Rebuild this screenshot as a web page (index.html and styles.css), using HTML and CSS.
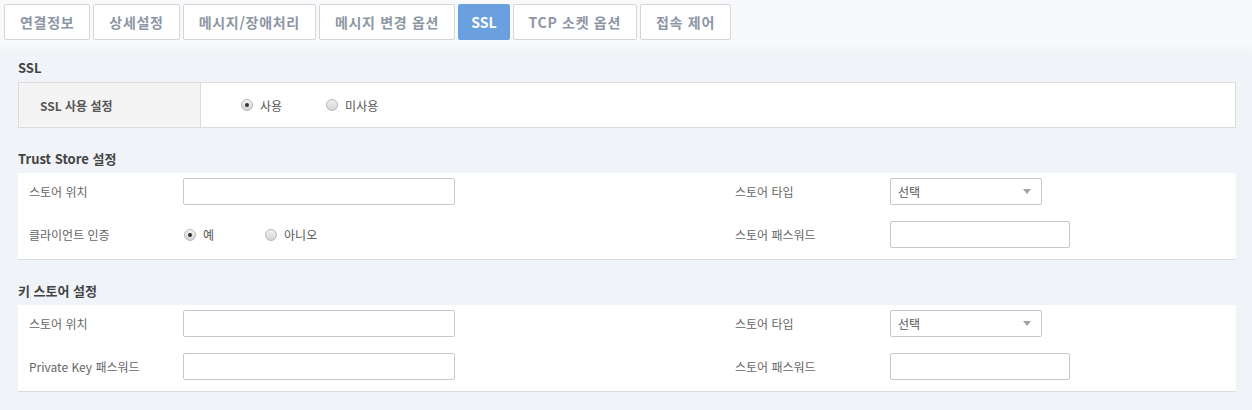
FILE: index.html
```html
<!DOCTYPE html>
<html lang="ko">
<head>
<meta charset="utf-8">
<title>SSL</title>
<link rel="stylesheet" href="styles.css">
</head>
<body>
<div class="tabs">
  <div class="tab">연결정보</div>
  <div class="tab">상세설정</div>
  <div class="tab">메시지/장애처리</div>
  <div class="tab">메시지 변경 옵션</div>
  <div class="tab active">SSL</div>
  <div class="tab">TCP 소켓 옵션</div>
  <div class="tab">접속 제어</div>
</div>
<div class="content">
  <h3 class="heading first">SSL</h3>
  <div class="ssl-table">
    <div class="ssl-label">SSL 사용 설정</div>
    <div class="ssl-value">
      <label class="radio-opt wide"><span class="radio checked"></span><span>사용</span></label>
      <label class="radio-opt"><span class="radio"></span><span>미사용</span></label>
    </div>
  </div>

  <h3 class="heading">Trust Store 설정</h3>
  <div class="form-section">
    <div class="label">스토어 위치</div>
    <div class="control"><span class="input w272"></span></div>
    <div class="label">스토어 타입</div>
    <div class="control"><span class="select"><span>선택</span><span class="arrow"></span></span></div>

    <div class="label">클라이언트 인증</div>
    <div class="control radios">
      <label class="radio-opt narrow"><span class="radio checked"></span><span>예</span></label>
      <label class="radio-opt"><span class="radio"></span><span>아니오</span></label>
    </div>
    <div class="label">스토어 패스워드</div>
    <div class="control"><span class="input w180"></span></div>
  </div>

  <h3 class="heading">키 스토어 설정</h3>
  <div class="form-section">
    <div class="label">스토어 위치</div>
    <div class="control"><span class="input w272"></span></div>
    <div class="label">스토어 타입</div>
    <div class="control"><span class="select"><span>선택</span><span class="arrow"></span></span></div>

    <div class="label">Private Key 패스워드</div>
    <div class="control"><span class="input w272"></span></div>
    <div class="label">스토어 패스워드</div>
    <div class="control"><span class="input w180"></span></div>
  </div>
</div>
</body>
</html>
```

FILE: styles.css
```css
* { box-sizing: border-box; }

html, body {
  margin: 0;
  padding: 0;
}

body {
  font-family: "Noto Sans CJK KR", "Noto Sans", sans-serif;
  font-size: 12px;
  color: #555;
  background: linear-gradient(to bottom, #f8f9fb 0, #f8f9fb 40px, #f0f3f7 56px, #f0f3f7 100%);
  min-height: 410px;
}

.tabs {
  display: flex;
  gap: 3px;
  padding: 4px 0 0 4px;
  height: 40px;
}

.tab {
  height: 36px;
  padding: 0 15px;
  border: 1px solid #d4d6d9;
  border-radius: 2px;
  background: #fff;
  color: #8d96a4;
  font-weight: bold;
  font-size: 14px;
  letter-spacing: 0.7px;
  line-height: 34px;
  white-space: nowrap;
}

.tab.active {
  background: #6ba0e0;
  border-color: #6ba0e0;
  color: #fff;
  padding: 0 12px;
  letter-spacing: 0;
}

.content {
  padding: 17px 16px 0 18px;
}

.heading {
  margin: 20px 0 4px;
  font-size: 13px;
  line-height: 21px;
  font-weight: bold;
  color: #444;
}

.heading.first {
  margin-top: 0;
}

.ssl-table {
  display: flex;
  height: 46px;
  border: 1px solid #dcdcdc;
  background: #fff;
}

.ssl-label {
  width: 182px;
  background: #f4f4f4;
  border-right: 1px solid #dcdcdc;
  padding-left: 21px;
  display: flex;
  align-items: center;
  font-weight: bold;
  color: #555;
}

.ssl-value {
  display: flex;
  align-items: center;
  padding-left: 40px;
}

.radio-opt {
  display: inline-flex;
  align-items: center;
  gap: 7px;
  color: #555;
}

.radio-opt.wide { margin-right: 44px; }
.radio-opt.narrow { margin-right: 51px; }

.radio {
  width: 12px;
  height: 12px;
  border-radius: 50%;
  border: 1px solid #b9b9b9;
  background: linear-gradient(to bottom, #f2f2f2, #d4d4d4);
  display: inline-flex;
  align-items: center;
  justify-content: center;
}

.radio.checked::after {
  content: "";
  width: 4px;
  height: 4px;
  border-radius: 50%;
  background: #333;
}

.form-section {
  display: grid;
  grid-template-columns: 165px 541px 166px 1fr;
  grid-auto-rows: 27px;
  row-gap: 16px;
  align-items: center;
  padding: 5px 0 11px;
  background: #fff;
  border-bottom: 1px solid #dcdcdc;
}

.label {
  padding-left: 11px;
  color: #666;
  line-height: 16px;
  white-space: nowrap;
}

.control {
  display: flex;
  align-items: center;
  height: 27px;
}

.control.radios {
  padding-left: 1px;
}

.input {
  display: block;
  height: 27px;
  border: 1px solid #c3c9d1;
  border-radius: 2px;
  background: #fff;
}

.w272 { width: 272px; }
.w180 { width: 180px; }

.select {
  width: 152px;
  height: 27px;
  border: 1px solid #c3c9d1;
  border-radius: 2px;
  background: #fff;
  display: flex;
  align-items: center;
  justify-content: space-between;
  padding: 0 10px 0 7px;
  color: #555;
}

.arrow {
  width: 0;
  height: 0;
  border-left: 4px solid transparent;
  border-right: 4px solid transparent;
  border-top: 5px solid #a0a4aa;
}
```
